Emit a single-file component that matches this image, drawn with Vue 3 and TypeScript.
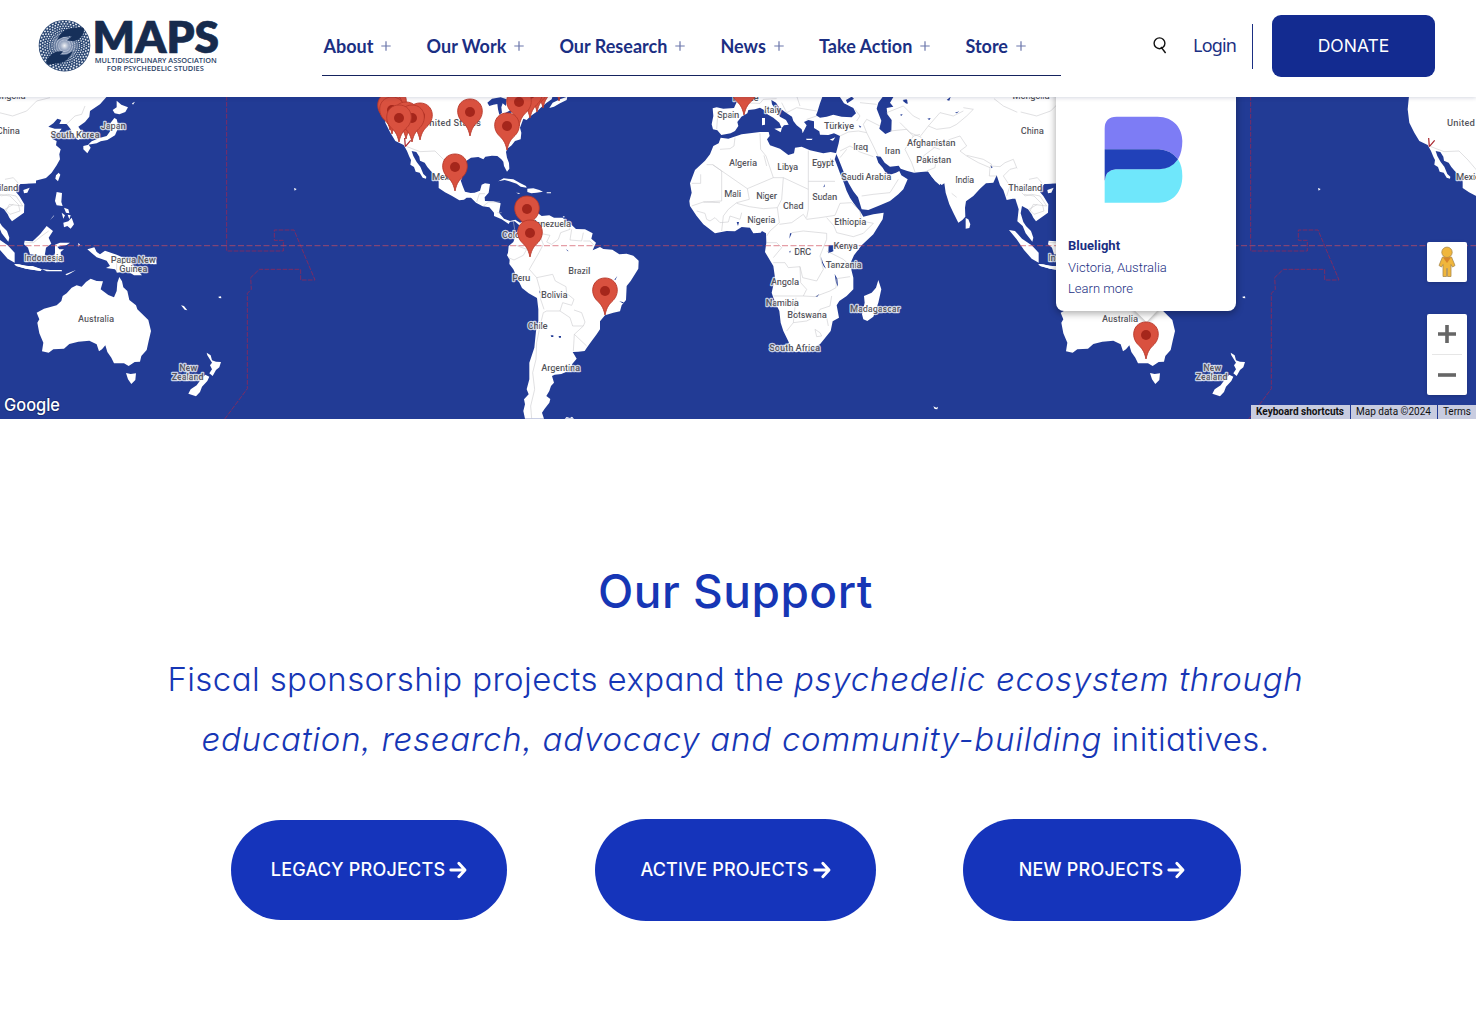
<script setup lang="ts">
interface MapLabel { text: string; x: number; y: number; w: number }
interface Pin { x: number; y: number }

const menu: string[] = ['About', 'Our Work', 'Our Research', 'News', 'Take Action', 'Store']
const projects: { label: string; kind: string }[] = [
  { label: 'LEGACY PROJECTS', kind: 'legacy' },
  { label: 'ACTIVE PROJECTS', kind: 'active' },
  { label: 'NEW PROJECTS', kind: 'new' },
]

// The world repeats horizontally every 1024 px at this zoom level
const copies: number[] = [-1024, 0, 1024]

const raw: [string, number, number, number][] = [
  ['France', 745.7, 101, 26], ['Italy', 772.7, 112.7, 17], ['Spain', 728.3, 118.5, 22], ['Türkiye', 839, 128.7, 30],
  ['Iraq', 860.7, 149.7, 15], ['Iran', 892.5, 154.5, 15.5], ['Algeria', 743, 165.7, 28], ['Libya', 787.7, 169.7, 21],
  ['Egypt', 823, 165.7, 22], ['Saudi Arabia', 866.3, 180.5, 50], ['Mali', 732.7, 197.5, 17], ['Niger', 766.7, 198.7, 21],
  ['Sudan', 824.7, 200.5, 25], ['Chad', 793.3, 209.5, 20.5], ['Nigeria', 761.3, 222.7, 28], ['Ethiopia', 850.3, 224.7, 32],
  ['Kenya', 845.7, 248.7, 24.5], ['DRC', 802.7, 254.7, 17], ['Tanzania', 843.7, 267.7, 36], ['Angola', 785, 284.7, 28],
  ['Namibia', 782.3, 305.7, 33], ['Botswana', 807, 317.7, 39.5], ['Madagascar', 875, 311.7, 50], ['South Africa', 794.7, 350.7, 51],
  ['Afghanistan', 931.3, 145.7, 48.5], ['Pakistan', 933.7, 163.5, 35], ['India', 964.7, 182.7, 19], ['Thailand', 1025.3, 191.5, 34],
  ['China', 1032.3, 134.5, 23], ['Mongolia', 1031, 98.8, 37], ['Indonesia', 1067.7, 261.5, 39], ['Papua New', 1157.3, 262.7, 45],
  ['Guinea', 1157.3, 271.7, 28], ['Japan', 1137.3, 128.7, 25], ['South Korea', 1099, 138.5, 49], ['Australia', 1120, 322.5, 36],
  ['New', 1212.3, 370.7, 18], ['Zealand', 1211.7, 379.7, 32], ['United States', 452, 126.5, 58], ['Mexico', 446.5, 179.7, 29],
  ['Venezuela', 550.5, 226.7, 41], ['Colombia', 521, 238.5, 38], ['Brazil', 579.3, 273.7, 22], ['Peru', 521.3, 280.7, 18],
  ['Bolivia', 554.3, 297.7, 26.5], ['Chile', 537.7, 328.7, 20], ['Argentina', 560.7, 370.7, 39],
]
// Every label that falls inside the viewport and is not fully behind the info window
const labels: MapLabel[] = copies
  .flatMap((dx) => raw.map(([text, x, y, w]) => ({ text, x: x + dx, y, w })))
  .filter((l) => l.x + l.w / 2 > 0 && l.x - l.w / 2 < 1476)
  .filter((l) => !(l.x - l.w / 2 > 1056 && l.x + l.w / 2 < 1236 && l.y < 305))

const pins: Pin[] = [
  { x: 559, y: 101 }, { x: 543, y: 108 }, { x: 537, y: 112 }, { x: 530, y: 118 }, { x: 519, y: 126 },
  { x: 394, y: 126 }, { x: 390, y: 130 }, { x: 392, y: 134 }, { x: 420, y: 140 }, { x: 406, y: 139 }, { x: 412, y: 142 }, { x: 399, y: 142 },
  { x: 470, y: 136 }, { x: 507, y: 150 }, { x: 455, y: 191 }, { x: 527, y: 233 }, { x: 530, y: 257 }, { x: 605, y: 315 },
  { x: 744, y: 115 }, { x: 1146, y: 359 },
]

// Rings of the emblem's dotted rosette
const rings: { r: number; w: number; dash: string; off: number }[] = Array.from({ length: 9 }, (_, i) => {
  const r = 24.2 - i * 2.3
  const step = (2 * Math.PI * r) / 44
  return { r, w: 1.5 - i * 0.06, dash: `${step * 0.52} ${step * 0.48}`, off: (i % 2) * step * 0.5 }
})
</script>

<template>
  <div class="page">
    <header class="header">
      <svg class="logo" width="184" height="60" viewBox="36 16 184 60">
        <defs>
          <radialGradient id="glow">
            <stop offset="0" stop-color="#fff" stop-opacity=".95" />
            <stop offset=".35" stop-color="#c3cce0" stop-opacity=".65" />
            <stop offset="1" stop-color="#c3cce0" stop-opacity="0" />
          </radialGradient>
        </defs>
        <circle cx="64.5" cy="45.7" r="25.8" fill="#2a4672" />
        <circle
          v-for="g in rings" :key="g.r" cx="64.5" cy="45.7" :r="g.r" fill="none" stroke="#e6ebf3"
          :stroke-width="g.w" :stroke-dasharray="g.dash" :stroke-dashoffset="g.off"
        />
        <circle cx="64.5" cy="45.7" r="15" fill="url(#glow)" />
        <path d="M57 40 C60 34 64 29 70 28.500 C75 28 79 27 83.500 28 C85 31 83 36 79 39 C74 42 70 41 67 40.500 L72 36 L63 37Z" fill="#16305a" />
        <path d="M73 51 C70 57 66 62.500 60 63 C55 63.500 51 65 47 64 C46 60 48 57 52 54 C56 51 60 51 63 51.500 L60 55 L67 54.500Z" fill="#16305a" />
        <g class="brand">
          <text x="92.500" y="53.200" font-size="44" font-weight="800" textLength="126.500" lengthAdjust="spacingAndGlyphs">MAPS</text>
          <text class="sub" x="94.800" y="63.100" textLength="122" lengthAdjust="spacingAndGlyphs">MULTIDISCIPLINARY ASSOCIATION</text>
          <text class="sub" x="106.800" y="71.400" textLength="97" lengthAdjust="spacingAndGlyphs">FOR PSYCHEDELIC STUDIES</text>
        </g>
      </svg>
      <nav class="nav">
        <a v-for="m in menu" :key="m" class="nav-item">
          <span>{{ m }}</span>
          <svg width="10" height="10" viewBox="0 0 10 10"><path d="M5 .3V9.700M.3 5H9.700" stroke="#6b76ab" stroke-width="1.200" /></svg>
        </a>
      </nav>
      <div class="tools">
        <svg width="14" height="18" viewBox="0 0 14 18" fill="none" stroke="#111" stroke-width="1.400">
          <circle cx="6.500" cy="6.300" r="5.400" /><path d="M8 10 L12.600 16" />
        </svg>
        <a class="login">Login</a>
        <a class="donate">DONATE</a>
      </div>
    </header>

    <section class="map">
      <svg class="world" width="1476" height="322" viewBox="0 97 1476 322">
        <g v-for="dx in copies" :key="dx" :transform="`translate(${dx} 0)`">
          <!-- Americas -->
          <g transform="translate(370 96) scale(.33333)">
            <g class="land">
              <path d="M45 0 41 40 46 80 61 110 76 135 101 147 111 165 118 182 123 192 121 206 132 213 137 227 149 230 158 245 168 248 169 242 160 234 151 212 140 198 130 180 125 165 139 168 148 182 150 194 164 200 172 213 183 226 194 236 206 252 206 276 225 289 245 299 268 313 282 311 290 305 303 305 318 320 338 331 358 334 372 350 372 360 395 370 416 384 420 377 434 376 448 388 444 400 437 418 430 438 416 450 414 470 411 478 419 491 418 504 430 520 440 543 456 576 476 592 501 606 505 640 505 680 498 705 493 755 484 782 478 800 478 850 470 880 476 895 462 910 465 925 460 945 465 968H522L516 950 524 938 538 920 541 909 529 900 538 885 543 870 552 860 546 840 554 836 574 834 603 821 606 805 620 788 608 768 625 767 644 765 652 753 665 735 680 715 690 700 690 676 705 658 730 650 750 646 755 628 768 612 770 570 782 555 805 518 806 494 790 479 770 473 748 475 727 461 700 459 690 453 668 463 678 440 664 428 668 412 645 400 618 399 601 383 590 377 578 365 552 365 538 358 515 360 502 350 483 360 470 372 450 380 436 371 420 375 402 368 387 350 392 322 370 316 345 315 344 304 356 290 360 264 345 262 335 266 330 284 314 290 302 291 285 287 278 270 271 250 275 215 285 197 303 185 325 183 340 190 346 182 366 179 382 180 394 190 400 197 402 210 411 227 418 218 417 201 411 185 408 168 412 158 425 148 435 135 452 130 454 110 450 95 460 68 470 72 482 60 500 47 512 35 530 20 545 10 548 0Z" />
              <path d="M538 36 548 20 570 10 592 2 590 12 570 22 552 32Z" />
              <path d="M385 256 401 247 430 250 450 261 468 270 470 275 452 272 440 263 418 256 404 252Z M472 278 490 277 508 282 519 287 500 290 484 292 472 288Z M438 290 450 291 447 294Z M530 289H543V292H530Z M548 290 551 293Z M578 361 584 361 582 366Z M584 968 590 963 600 966 606 962 612 968Z" />
            </g>
            <g class="lake">
              <path d="M352 20 366 8 392 4 410 10 408 30 398 22 394 34 396 50 388 56 384 40 382 24 370 26 358 30Z M404 52 430 38 434 44 412 56Z M742 540 736 552 733 551Z M748 616 762 619 758 622Z M508 583 512 590 509 592Z M542 718H550V723H544Z M566 720H573V725H567Z M588 459 596 466 592 465Z" />
            </g>
            <g class="border">
              <path d="M111 152 150 167 195 165 222 192 250 225M320 318 328 293 345 293M340 330 356 318 390 318M382 350 395 350M430 376 434 400M502 355 490 380 500 410 540 418 530 438 545 445 565 430 572 410 600 400 595 385M510 420 520 445 508 468 478 520 500 545 548 535 556 555 588 572 590 592 612 610 605 628 578 620 570 645 530 645 520 650 510 690 500 740 498 790 488 830 494 880 482 930 485 968M605 400 600 432 635 435 640 410M640 435 660 435 672 448M415 485 432 492 460 478 470 460 438 448M500 545 510 580 512 610 522 640M570 645 600 665 608 690 640 690 645 678 635 650 612 642M640 690 613 715 610 765M613 715 650 750" />
            </g>
            <path d="M106 152 104 126M106 152 122 133" class="spot" />
          </g>
          <!-- Europe, Africa and the Middle East -->
          <g transform="translate(660 96) scale(.33333)">
            <g class="land">
              <path d="M222 0 230 18 222 36 190 38 170 34 158 37 160 60 155 85 159 100 172 103 184 117 212 112 225 105 235 90 232 78 244 62 262 52 265 42 285 40 300 35 312 42 322 55 340 65 358 80 365 97 372 88 386 86 378 72 360 62 348 42 336 25 334 12 348 20 358 35 375 48 396 62 400 75 410 88 425 100 428 112 434 100 440 88 432 78 445 72 462 76 462 96 478 106 480 116 505 117 522 112 540 120 536 142 528 172 536 190 552 230 566 262 580 286 594 304 605 340 625 342 660 328 690 315 715 295 730 280 743 250 724 238 718 225 708 230 690 236 678 232 668 215 655 200 648 180 662 182 674 200 690 212 716 209 722 218 742 225 762 230 804 226 825 255 840 268V0Z" />
              <path d="M182 125 205 128 245 115 300 108 326 108 329 120 321 130 330 148 360 158 385 177 402 172 405 155 425 152 450 163 490 172 512 168 530 172 524 190 530 205 540 232 552 262 560 285 570 305 580 320 603 350 610 362 640 355 671 350 668 370 640 415 605 448 582 478 570 505 580 545 580 580 560 600 538 615 530 628 537 665 518 676 512 705 480 745 440 765 405 767 394 760 386 738 370 705 362 680 358 645 340 605 335 590 345 545 340 510 315 468 319 440 318 412 306 405 302 410 280 412 270 395 245 393 225 406 200 405 165 412 130 385 110 360 90 330 88 315 95 290 90 262 105 222 135 194 150 175 160 150 176 142Z" />
              <path d="M655 552 664 580 655 620 640 662 622 675 610 670 606 655 614 620 612 600 635 590 648 575Z M306 66 315 66 315 86 306 88Z M343 98 366 95 362 109Z M438 128H458L455 132H440Z M509 131 526 124 519 134Z M820 931 829 935 834 932 832 940 824 939Z" />
            </g>
            <g class="lake">
              <path d="M472 48 480 22 488 0H538L552 22 580 36 588 52 575 64 545 62 520 56 500 62 480 65 468 58Z M558 12 575 2 582 8 562 22Z M655 20 670 0H702L690 20 700 32 680 36 682 55 695 72 694 106 676 114 658 98 664 74 650 38Z M506 448H520V466L505 472Z M484 482 488 498 498 518 492 512 486 500Z M524 534 532 548 534 572 528 560Z M494 264 490 274 494 272Z M513 240 516 250Z M230 378 237 378 234 390Z M466 602 478 594 472 602Z M444 632 452 626Z M510 185 514 200 511 196Z M596 88 604 92 600 95Z M728 12 744 24 740 10Z M804 65 812 72 806 72Z" />
              <path d="M395 412 388 428 390 412Z M388 466 392 464 390 472Z" />
            </g>
            <g class="border">
              <path d="M140 206H158L262 278 340 245 318 180 302 160 300 112M158 206 185 225V315L130 318 95 330M95 262H122V235M262 278 268 310 230 320 205 340 190 360 185 405M340 245 370 245 445 280V164M445 256H525M445 280V340L440 365M370 245 365 310 352 335 310 338 268 332 230 322M352 335 358 380 330 405 320 420M358 385 395 380 430 355 440 370 480 365 525 358 540 322 575 320 600 345 605 375 640 382 610 412 580 422 530 410 522 390 500 365M395 410 430 405 500 412 500 430 480 480 490 520 470 555 428 545 420 512 385 515 375 500 340 500M320 440H350L365 455 340 485M500 465 550 490 572 510M340 600H430L465 602 510 585 528 575 530 548 570 542M420 512 422 560 440 580 430 600M408 605 400 680 380 705M400 680 440 675 470 660 480 640 510 630 515 600M465 700 480 710 485 720 470 722ZM500 665 505 690" />
              <path d="M180 160 210 158 222 150 225 125M110 345 135 352 140 370 150 375 165 365 180 380 205 378 210 360 240 370 245 350M540 120 565 108 595 105 620 110 610 85 620 70 660 90M540 165 570 150 600 168 640 182M540 185 560 160M620 110 640 150 655 182M605 300 640 295 690 290 715 250M690 105 740 100 760 120 735 160 755 200 765 228M585 40 600 60 590 75 M680 50 730 30 760 60 800 80 840 60M760 120 800 110 840 130M840 185 800 228M600 20 650 25M365 20 380 50 410 35 470 45M230 20 300 22 310 10 350 8M410 0 420 30M440 70 470 60M174 45 170 100M312 178 320 210M130 318 180 320" />
            </g>
          </g>
          <!-- South Asia -->
          <g transform="translate(900 96) scale(.33333)">
            <g class="land">
              <path d="M60 0V226L84 226 95 242 105 252 125 267 133 262 137 290 148 325 160 350 175 380 187 372 196 362 195 335 198 316 220 300 240 278 258 262 280 260 290 238 300 268 310 282 320 312 338 308 346 308 356 340 352 376 368 390 377 412 397 437 400 425 393 405 378 390 370 378 362 352 366 330 384 340 395 355 400 365 408 376 444 350 445 325 430 300 418 286 432 264 480 262V0Z" />
              <path d="M197 366 205 370 211 385 208 396 197 398Z M327 402 345 405 366 428 395 448 416 470 416 500 395 488 372 462 350 430Z M415 504 430 505 450 510 470 510 497 520 494 525 450 518 420 510Z" />
            </g>
            <g class="lake"><path d="M140 12 152 2 148 14ZM165 50 178 46 170 52ZM82 68 92 66 88 72ZM8 14 22 12 20 24ZM0 56 8 54 4 60ZM272 208 278 214 274 217Z" /></g>
            <g class="border">
              <path d="M282 8 310 30 350 48 410 60 450 45 480 30M0 80 30 110 60 122 85 90 110 100 150 95 170 85 200 60 220 40 190 35M85 90 120 50 160 60 190 45M60 122 90 150 120 160M80 200 70 180 110 150 150 130 180 120 200 150 180 165 200 180 235 200 270 215 275 205 250 190 200 178M270 210 300 212 315 200 340 190 350 215 330 220 310 240 330 270 320 300M270 215 268 240 290 240M350 215 380 250 410 255 430 262M360 240 350 275 375 300 395 295 420 300 440 330 400 325 390 345M155 292 170 304M80 225 105 215 110 180" />
            </g>
          </g>
          <!-- East Asia and Oceania -->
          <g transform="translate(1024 96) scale(.33333)">
            <g class="land">
              <path d="M-20 0V290H48L46 272 62 264 82 262 100 256 138 246 155 230 170 208 180 190 178 175 182 160 168 148 170 135 156 128 160 112 178 108 185 98 164 98 145 92 160 82 172 68 184 72 178 84 200 84 212 100 218 115 234 132 248 125 246 108 235 92 255 78 268 62 270 45 300 25 322 0Z" />
              <path d="M350 14 364 26 384 34 376 48 358 55 344 52 338 42 350 34Z M343 66 350 70 356 92 345 118 322 132 302 136 290 142 264 146 275 136 298 126 320 120 336 98 332 80Z M250 150 266 146 272 155 262 172 250 160Z M176 230 181 236 174 256 166 248 168 238Z M70 282 89 275 82 290 72 292Z M170 288 186 291 184 318 188 330 170 328 165 315Z M190 380 205 376 215 365 222 385 212 398 202 390 192 394Z M192 335 205 340 208 352 198 350ZM185 350 195 358 190 368ZM203 356 212 358 208 370ZM150 372 163 356 160 362Z M140 390 159 405 146 425 154 443 138 455 134 480 90 475 84 455 72 445 74 434 98 436 120 415Z M165 446 180 440 210 440 200 447 172 452 178 460 192 460 182 468 184 500 172 486 168 502 160 490 165 470Z M235 440 240 446 235 452Z M219 475 230 477ZM262 460 283 454 290 468 300 475 315 464 350 476 386 492 400 510 426 538 402 538 382 525 352 530 345 520 318 516 330 510 320 494 290 484 274 470Z M440 500 468 490 470 505 455 504Z M125 519 150 522 185 522 186 526 140 526Z M196 535 228 522 212 532 200 538Z M43 504 60 506 85 510 100 512 125 520 122 525 78 518 50 510Z" />
              <path d="M110 650 132 638 170 628 184 615 188 600 200 592 215 575 230 568 245 572 258 558 272 548 290 555 309 556 302 580 325 597 342 604 350 585 352 560 358 543 366 556 370 574 382 585 388 612 408 628 412 640 445 672 453 705 446 735 440 762 424 780 420 797 404 798 386 810 372 802 342 802 334 785 322 768 316 748 306 760 297 766 290 745 268 734 235 737 208 744 192 758 160 760 146 770 126 766 130 740 118 712 112 680 118 670Z M378 831 392 834 408 832 406 852 394 864 384 850Z M620 770 632 778 636 793 648 797 663 798 658 814 648 822 638 840 628 832 636 820 630 808 636 800 622 778Z M616 836 628 842 622 855 606 872 600 888 588 901 565 893 572 880 590 868 604 848Z M543 628 552 630 562 643 554 641Z M655 602 663 601 664 607 657 606Z M882 276 890 279 884 284Z M396 22 405 17 399 26ZM220 8 240 6 225 12Z" />
            </g>
            <g class="border"><path d="M-10 48 38 60 80 45 110 15 150 5M0 295 30 300 55 325 60 345 30 355 15 340 40 325M15 250 40 245 55 262M200 84 225 60 245 55 255 30M76 440 100 440 125 420 146 405M350 480V530" /></g>
            <path class="dateline" d="M680 0V465H850V433H823V402H882L945 552H902V520H778L752 545 754 580 742 592V878L672 972" />
          </g>
        </g>
        <path d="M0 245.700H1476" class="equator" />
        <g class="labels">
          <text v-for="(l, i) in labels" :key="i" :x="l.x - l.w / 2" :y="l.y - 0.100" :textLength="l.w">{{ l.text }}</text>
        </g>
        <path d="M1132 308 H1160 L1146.500 322Z" class="tail" />
        <g class="pins">
          <g v-for="(p, i) in pins" :key="i" :transform="`translate(${p.x} ${p.y})`">
            <path d="M0 0 C-1.800 -8.500 -4.500 -11 -8 -14.500 C-16 -22.500 -12.500 -37 0 -37 C12.500 -37 16 -22.500 8 -14.500 C4.500 -11 1.800 -8.500 0 0Z" fill="#d9513f" stroke="#b7382a" stroke-width=".9" />
            <circle cy="-24" r="5" fill="#a5261b" />
          </g>
        </g>
        <text class="google" x="4" y="411.300" textLength="56" lengthAdjust="spacingAndGlyphs">Google</text>
      </svg>

      <div class="popup">
        <svg class="popup-logo" width="80" height="88" viewBox="610 60 240 264">
          <path d="M612 160V98Q612 62 648 62H770C820 62 845 98 845 135Q845 168 832 190Q810 162 775 160Z" fill="#7d7cf5" />
          <path d="M612 320V255Q615 222 645 220H775Q812 217 832 190Q845 210 845 240C845 290 815 320 775 320Z" fill="#6fe7fb" />
          <path d="M612 160H775Q810 162 832 190Q812 219 775 220H645Q615 222 612 255Z" fill="#2141b9" />
        </svg>
        <strong>Bluelight</strong>
        <span>Victoria, Australia</span>
        <a>Learn more</a>
      </div>

      <div class="pegman">
        <svg width="18" height="32" viewBox="0 0 18 32" fill="#f0b63c" stroke="#a98a4f" stroke-width=".8">
          <path d="M4.500 11 L1 19.500 3.500 21 5 18.500 V30.500H8.500V22.500H9.500V30.500H13V18.500L14.500 21 17 19.500 13.500 11Z" />
          <circle cx="9" cy="6.300" r="5.200" /><path d="M5 11.500H13L9 17Z" fill="#d8852b" stroke="none" />
        </svg>
      </div>
      <div class="zoom">
        <button><svg width="18" height="18" viewBox="0 0 18 18"><path d="M7.200 0h3.600v7.200H18v3.600h-7.200V18H7.200v-7.200H0V7.200h7.200z" fill="#666" /></svg></button>
        <i></i>
        <button><svg width="18" height="18" viewBox="0 0 18 18"><path d="M0 7.200h18v3.600H0z" fill="#666" /></svg></button>
      </div>
      <div class="credits"><b>Keyboard shortcuts</b><span>Map data ©2024</span><span>Terms</span></div>
    </section>

    <main class="support">
      <h2>Our Support</h2>
      <p>Fiscal sponsorship projects expand the <em>psychedelic ecosystem through</em><br><em>education, research, advocacy and community-building</em> initiatives.</p>
      <div class="buttons">
        <a v-for="p in projects" :key="p.kind" :class="['btn', p.kind]">
          <span>{{ p.label }}</span>
          <svg width="18" height="18" viewBox="0 0 18 18" fill="none" stroke="#fff" stroke-width="2.900" stroke-linecap="round" stroke-linejoin="round"><path d="M1.800 9H15.500M9.800 2.300 16 9 9.800 15.700" /></svg>
        </a>
      </div>
    </main>
  </div>
</template>

<style>
body { background: #fff; }
</style>

<style scoped>
.page { width: 1476px; height: 1009px; overflow: hidden; background: #fff; }
.header { position: relative; z-index: 2; box-sizing: border-box; height: 97px; display: flex; align-items: flex-start; background: #fff; box-shadow: 0 1px 4px rgba(30, 40, 90, .18); }
.logo { margin: 16px 0 0 36px; flex: none; }
.brand { fill: #172b4d; font-family: Lato, sans-serif; }
.brand text:first-child { stroke: #172b4d; stroke-width: .6; stroke-linejoin: round; }
.brand .sub { font: 600 7.200px "Open Sans", sans-serif; fill: #2b3f66; }
.nav { box-sizing: border-box; width: 739px; height: 76px; margin-left: 102px; padding: 34px 35px 0 1.500px; display: flex; justify-content: space-between; align-items: flex-start; border-bottom: 1px solid #15235f; }
.nav-item { display: flex; align-items: center; gap: 8px; color: #1b2f83; font: 700 18px/24px Lato, sans-serif; letter-spacing: .01px; font-variant-ligatures: none; white-space: nowrap; }
.tools { display: flex; align-items: center; margin: 15px 0 0 92px; height: 62px; }
.login { margin-left: 26px; width: 59px; height: 45px; border-right: 1px solid #1b2f83; box-sizing: content-box; font: 400 18px/43px "Noto Sans", sans-serif; letter-spacing: -.8px; color: #1b2f83; white-space: nowrap; }
.donate { margin-left: 19px; width: 163px; height: 62px; border-radius: 9px; background: #132b90; color: #fff; text-align: center; font: 400 17.500px/62px Inter, sans-serif; }

.map { position: relative; height: 322px; background: #223b95; overflow: hidden; }
.world { display: block; }
.land { fill: #fff; }
.lake { fill: #223b95; }
.border { fill: none; stroke: #c4c4c8; stroke-width: 1.600; stroke-linejoin: round; }
.spot { fill: none; stroke: #a8262e; stroke-width: 3.600; }
.dateline { fill: none; stroke: #8a2a5c; stroke-width: 2.600; stroke-dasharray: 14 4; }
.equator { stroke: #cf4f5c; stroke-opacity: .55; stroke-width: 1.300; stroke-dasharray: 6 2.500; }
.labels text { font: 500 9.500px Roboto, sans-serif; fill: #55555c; stroke: #fff; stroke-opacity: .75; stroke-width: 2.400px; stroke-linejoin: round; paint-order: stroke; }
.tail { fill: #fff; filter: drop-shadow(0 1px 2px rgba(0, 0, 0, .35)); }
.google { font: 500 17.500px Inter, sans-serif; fill: #fff; stroke: #17296d; stroke-width: 1.500px; paint-order: stroke; }

.popup { position: absolute; left: 1056px; top: -20px; box-sizing: border-box; width: 180px; height: 234px; padding: 39px 12px 0; display: flex; flex-direction: column; background: #fff; border-radius: 8px; box-shadow: 0 2px 7px 1px rgba(0, 0, 0, .3); font: 300 13px/21.500px Roboto, sans-serif; color: #1b2f83; }
.popup-logo { margin: 0 0 31px 35.700px; }
.popup strong { font-weight: 700; }

.pegman, .zoom { position: absolute; left: 1427px; width: 40px; background: #fff; border-radius: 2px; box-shadow: 0 1px 4px -1px rgba(0, 0, 0, .3); }
.pegman { top: 145px; height: 40px; display: flex; align-items: center; justify-content: center; }
.zoom { top: 217px; height: 81px; display: flex; flex-direction: column; align-items: center; }
.zoom i { width: 30px; height: 1px; background: #e6e6e6; }
.zoom button { width: 40px; height: 40px; padding: 0; border: 0; background: none; display: flex; align-items: center; justify-content: center; }
.credits { position: absolute; right: 0; bottom: 0; display: flex; gap: 1px; font: 400 10px/14px Roboto, sans-serif; color: #111; white-space: nowrap; }
.credits > * { padding: 0 6px 0 5px; background: #c8cce0; }
.credits > :last-child { padding-right: 5px; }
.credits b { font-weight: 700; }

.support { text-align: center; color: #1636b5; font-family: Inter, sans-serif; font-feature-settings: "cv11", "ss03"; }
.support h2 { margin: 142px 5px 0 0; font-size: 46px; line-height: 60px; font-weight: 500; letter-spacing: .5px; }
.support p { margin: 28px 5px 0 0; font-size: 33px; line-height: 60px; font-weight: 300; letter-spacing: .4px; white-space: nowrap; }
.support em { letter-spacing: .76px; }
.buttons { display: flex; align-items: center; margin: 50px 0 0 231px; }
.btn { box-sizing: border-box; width: 276px; height: 100px; border-radius: 50px; display: flex; align-items: center; justify-content: center; gap: 4px; background: #1534bb; color: #fff; font-size: 18px; letter-spacing: .2px; font-weight: 500; white-space: nowrap; }
.btn span { margin-top: -2px; }
.btn.active { width: 281px; height: 102px; margin-left: 88px; border-radius: 51px; }
.btn.new { width: 278px; height: 102px; margin-left: 87px; border-radius: 51px; }
</style>
